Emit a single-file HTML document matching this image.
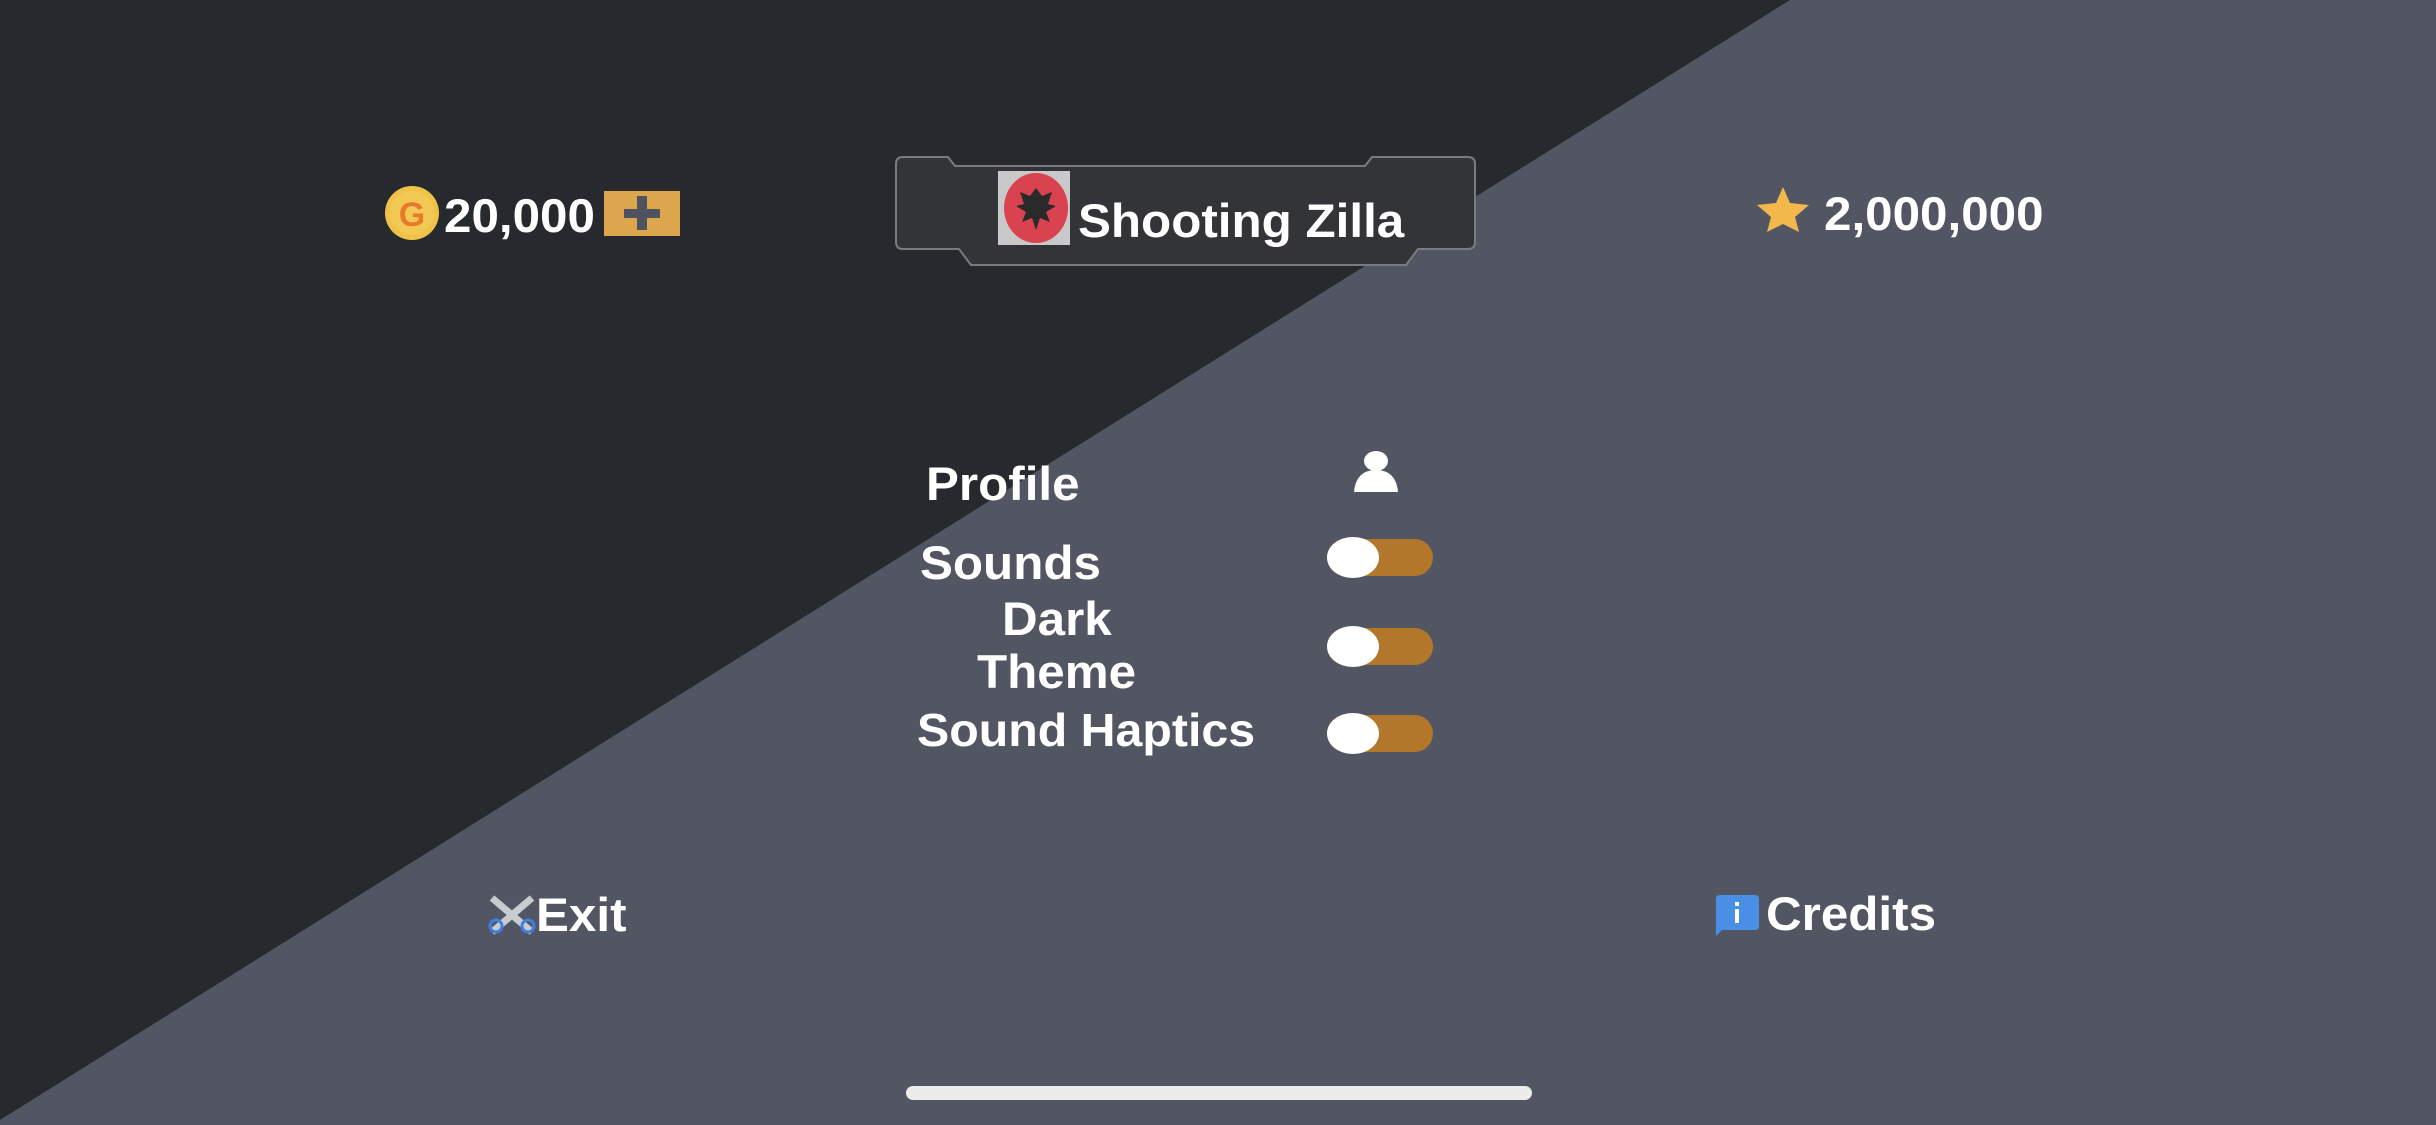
<!DOCTYPE html>
<html><head><meta charset="utf-8"><style>
html,body{margin:0;padding:0;width:2436px;height:1125px;overflow:hidden;background:#525663;font-family:"Liberation Sans",Arial,sans-serif;font-weight:bold;color:#fff}
.t{position:absolute;white-space:nowrap;font-size:47px;line-height:1;transform:scaleX(1.05);transform-origin:0 0}
.tog{position:absolute;left:1327px;width:106px;height:37px;border-radius:19px;background:#b3772b}
.tog:before{content:"";position:absolute;left:0;top:-2px;width:52px;height:41px;border-radius:50%;background:#fff}
</style></head><body>
<svg width="2436" height="1125" style="position:absolute;left:0;top:0">
<polygon points="0,0 1790,0 0,1120" fill="#26292d"/>
<path d="M903,157 L948,157 L955,166 L1365,166 L1372,157 L1468,157 Q1475,157 1475,164 L1475,242 Q1475,249 1468,249 L1418,249 L1406,265 L971,265 L959,249 L903,249 Q896,249 896,242 L896,164 Q896,157 903,157 Z" fill="#333438" stroke="#7a7b80" stroke-width="2"/>
<rect x="998" y="171" width="72" height="74" fill="#c9c9c9"/>
<ellipse cx="1036" cy="208" rx="32" ry="35" fill="#d9434f"/>
<path d="M1036,188 l6,8 l10,-4 l-4,12 l8,2 l-10,6 l4,10 l-10,-4 l-4,12 l-4,-12 l-10,4 l4,-10 l-10,-6 l8,-2 l-4,-12 l10,4 z" fill="#2a2a2a"/>
<circle cx="412" cy="213" r="27" fill="#f0c24a"/>
<circle cx="412" cy="213" r="22" fill="#f3c955"/>
<text x="412" y="226" font-size="34" font-weight="bold" fill="#e8782a" text-anchor="middle" font-family="Liberation Sans">G</text>
<rect x="604" y="191" width="76" height="45" fill="#dca64e"/>
<rect x="624" y="209" width="36" height="9" fill="#4f5360"/>
<rect x="637" y="196" width="10" height="34" fill="#4f5360"/>
<polygon points="1783,187 1790,203 1809,205 1795,217 1799,232 1783,224 1767,232 1771,217 1757,205 1776,203" fill="#f2b84c"/>
<ellipse cx="1376" cy="461" rx="12" ry="10" fill="#fff"/>
<path d="M1354,492 Q1356,470 1376,470 Q1396,470 1398,492 Z" fill="#fff"/>
<path d="M492,898 L532,932 M532,898 L492,932" stroke="#c8ccd0" stroke-width="7"/>
<circle cx="496" cy="926" r="6" fill="none" stroke="#3f7fe0" stroke-width="3"/>
<circle cx="528" cy="926" r="6" fill="none" stroke="#3f7fe0" stroke-width="3"/>
<path d="M1720,895 L1755,895 Q1759,895 1759,899 L1759,926 Q1759,930 1755,930 L1722,930 L1716,936 L1716,899 Q1716,895 1720,895 Z" fill="#4a8fe6"/>
<rect x="1735" y="909" width="4" height="14" fill="#fff"/><rect x="1735" y="902" width="4" height="4" fill="#fff"/>
<rect x="906" y="1086" width="626" height="14" rx="7" fill="#ececec"/>
</svg>
<div class="t" style="left:444px;top:192px">20,000</div>
<div class="t" style="left:1078px;top:197px">Shooting Zilla</div>
<div class="t" style="left:1824px;top:190px">2,000,000</div>
<div class="t" style="left:926px;top:460px">Profile</div>
<div class="t" style="left:920px;top:539px">Sounds</div>
<div class="t" style="left:1002px;top:595px">Dark</div>
<div class="t" style="left:977px;top:648px">Theme</div>
<div class="t" style="left:917px;top:707px;font-size:46px">Sound Haptics</div>
<div class="t" style="left:536px;top:891px">Exit</div>
<div class="t" style="left:1766px;top:890px">Credits</div>
<div class="tog" style="top:539px"></div>
<div class="tog" style="top:628px"></div>
<div class="tog" style="top:715px"></div>
</body></html>
